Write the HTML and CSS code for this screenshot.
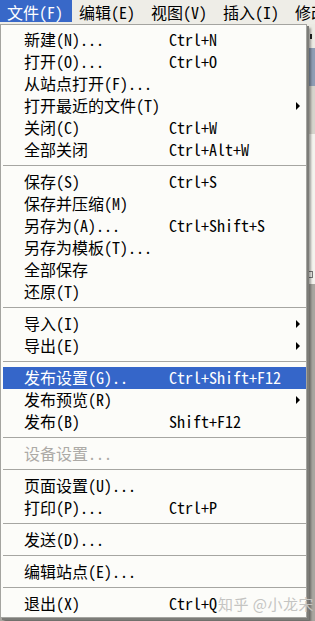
FILE: index.html
```html
<!DOCTYPE html>
<html lang="zh-CN">
<head>
<meta charset="utf-8">
<title>文件菜单</title>
<link rel="stylesheet" href="styles.css">
</head>
<body>
<div class="app">
  <div class="menubar">
    <span class="top-item active">文件(F)</span>
    <span class="top-item">编辑(E)</span>
    <span class="top-item">视图(V)</span>
    <span class="top-item">插入(I)</span>
    <span class="top-item">修改(M)</span>
  </div>
  <div class="workspace">
    <div class="ws-toolbar"><span class="ws-mark"></span></div>
    <div class="ws-band"></div>
    <div class="ws-grey"></div>
    <div class="ws-white"><span class="ws-box"></span></div>
    <div class="ws-dark"></div>
  </div>
</div>

<div class="dropdown">
  <div class="row"><span class="lbl">新建(N)...</span><span class="key">Ctrl+N</span></div>
  <div class="row"><span class="lbl">打开(O)...</span><span class="key">Ctrl+O</span></div>
  <div class="row"><span class="lbl">从站点打开(F)...</span></div>
  <div class="row sub"><span class="lbl">打开最近的文件(T)</span><span class="arrow"></span></div>
  <div class="row"><span class="lbl">关闭(C)</span><span class="key">Ctrl+W</span></div>
  <div class="row"><span class="lbl">全部关闭</span><span class="key">Ctrl+Alt+W</span></div>
  <div class="sep"></div>
  <div class="row"><span class="lbl">保存(S)</span><span class="key">Ctrl+S</span></div>
  <div class="row"><span class="lbl">保存并压缩(M)</span></div>
  <div class="row"><span class="lbl">另存为(A)...</span><span class="key">Ctrl+Shift+S</span></div>
  <div class="row"><span class="lbl">另存为模板(T)...</span></div>
  <div class="row"><span class="lbl">全部保存</span></div>
  <div class="row"><span class="lbl">还原(T)</span></div>
  <div class="sep"></div>
  <div class="row sub"><span class="lbl">导入(I)</span><span class="arrow"></span></div>
  <div class="row sub"><span class="lbl">导出(E)</span><span class="arrow"></span></div>
  <div class="sep"></div>
  <div class="row hl"><span class="lbl">发布设置(G)..</span><span class="key">Ctrl+Shift+F12</span></div>
  <div class="row sub"><span class="lbl">发布预览(R)</span><span class="arrow"></span></div>
  <div class="row"><span class="lbl">发布(B)</span><span class="key">Shift+F12</span></div>
  <div class="sep"></div>
  <div class="row disabled"><span class="lbl">设备设置...</span></div>
  <div class="sep"></div>
  <div class="row"><span class="lbl">页面设置(U)...</span></div>
  <div class="row"><span class="lbl">打印(P)...</span><span class="key">Ctrl+P</span></div>
  <div class="sep"></div>
  <div class="row"><span class="lbl">发送(D)...</span></div>
  <div class="sep"></div>
  <div class="row"><span class="lbl">编辑站点(E)...</span></div>
  <div class="sep"></div>
  <div class="row"><span class="lbl">退出(X)</span><span class="key">Ctrl+Q</span></div>
</div>

<div class="watermark">知乎 @小龙宋</div>
</body>
</html>
```

FILE: styles.css
```css
html, body {
  margin: 0;
  padding: 0;
}
body {
  width: 315px;
  height: 621px;
  overflow: hidden;
  position: relative;
  background: #9c9a94;
  font-family: "Noto Sans Mono CJK SC", "Noto Sans CJK SC", "DejaVu Sans Mono", monospace;
  font-size: 16px;
  color: #000;
}

.app {
  display: flex;
  flex-direction: column;
  height: 621px;
}

.menubar {
  height: 24px;
  background: #eeede7;
  display: flex;
  align-items: flex-start;
  white-space: nowrap;
  overflow: hidden;
}
.top-item {
  flex: 0 0 auto;
  box-sizing: border-box;
  height: 22px;
  line-height: 21px;
  padding: 2px 8px 0 7px;
  width: 72px;
}
.top-item.active {
  background: #3868c8;
  color: #fff;
}

.workspace {
  flex: 1;
  display: flex;
  flex-direction: column;
}
.ws-toolbar {
  height: 24px;
  background: #ecebe4;
  display: flex;
  justify-content: flex-end;
  align-items: center;
}
.ws-mark {
  width: 2px;
  height: 5px;
  background: #222;
  margin-right: 3px;
}
.ws-band {
  height: 38px;
  background: #8e9db4;
}
.ws-grey {
  height: 48px;
  background: #d6d4cc;
}
.ws-white {
  height: 150px;
  background: #f4f3ee;
  display: flex;
  align-items: flex-end;
  justify-content: flex-end;
}
.ws-box {
  width: 5px;
  height: 5px;
  border: 1px solid #777;
  margin: 0 2px 6px 0;
}
.ws-dark {
  flex: 1;
  background: #a8a6a0;
}

.dropdown {
  position: absolute;
  left: 0;
  top: 24px;
  width: 303px;
  padding: 4px 0 2px 2px;
  background: #fcfcf9;
  border: 1px solid #a4a4a0;
  box-shadow: 2px 2px 0 #7c7c78, 4px 4px 2px rgba(0, 0, 0, 0.35);
}

.row {
  box-sizing: border-box;
  height: 22px;
  display: grid;
  grid-template-columns: 145px 1fr 10px;
  align-items: center;
  padding: 0 0 1px 21px;
  white-space: nowrap;
  line-height: 21px;
}
.row .lbl {
  grid-column: 1;
}
.row .key {
  grid-column: 2;
}
.row .arrow {
  grid-column: 3;
  justify-self: start;
  width: 0;
  height: 0;
  border-top: 4px solid transparent;
  border-bottom: 4px solid transparent;
  border-left: 4px solid #000;
}
.row.hl {
  background: #3566c9;
  color: #fff;
}
.row.disabled {
  color: #acaaa6;
}

.sep {
  height: 1px;
  margin: 4px 0 5px 0;
  background: #a6a6a2;
}

.watermark {
  position: absolute;
  left: 218px;
  top: 594px;
  font-family: "Noto Sans CJK SC", sans-serif;
  font-size: 15px;
  line-height: 20px;
  color: #c4c4c2;
  letter-spacing: 0.5px;
}
```
